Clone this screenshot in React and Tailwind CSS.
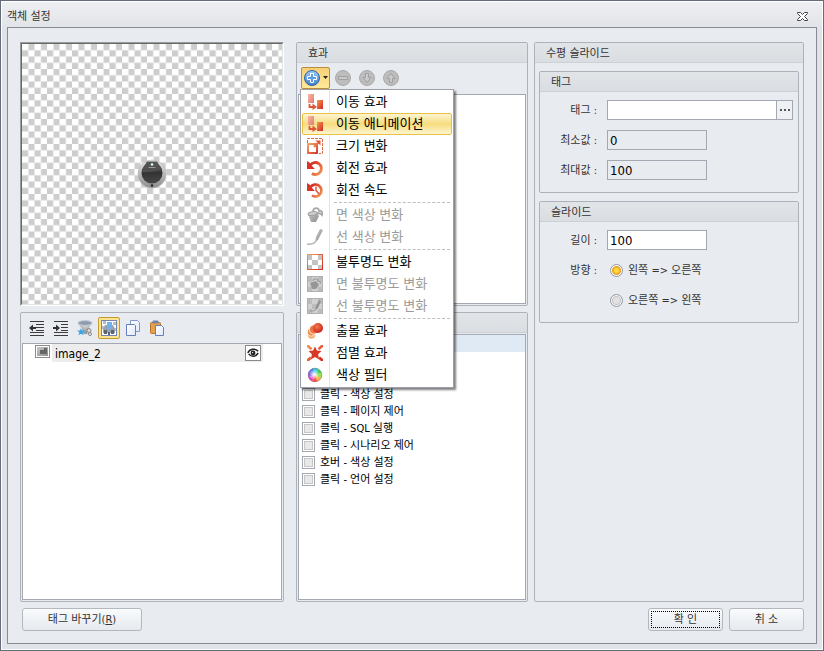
import React from "react";

const cn = (...c) => c.filter(Boolean).join(" ");

function Svg({ size = 16, children, className }) {
  return (
    <svg width={size} height={size} viewBox={`0 0 ${size} ${size}`} className={cn("block shrink-0", className)} aria-hidden="true">
      {children}
    </svg>
  );
}

function Gradients() {
  return (
    <svg width="0" height="0" className="absolute" aria-hidden="true">
      <defs>
        <linearGradient id="gRed" x1="0" y1="0" x2="1" y2="1">
          <stop offset="0" stopColor="#f39a55" />
          <stop offset="1" stopColor="#d3261f" />
        </linearGradient>
        <linearGradient id="gRedUp" x1="0" y1="0" x2="1" y2="1">
          <stop offset="0" stopColor="#d3261f" />
          <stop offset="1" stopColor="#f39a55" />
        </linearGradient>
        <linearGradient id="gPink" x1="0" y1="0" x2="1" y2="1">
          <stop offset="0" stopColor="#f9b9a0" />
          <stop offset="1" stopColor="#e4787a" />
        </linearGradient>
        <linearGradient id="gBlue" x1="0" y1="0" x2="0" y2="1">
          <stop offset="0" stopColor="#9ccbf5" />
          <stop offset="1" stopColor="#3f7fc9" />
        </linearGradient>
        <linearGradient id="gGray" x1="0" y1="0" x2="1" y2="1">
          <stop offset="0" stopColor="#c9c9c9" />
          <stop offset="1" stopColor="#8e8e8e" />
        </linearGradient>
        <linearGradient id="gPage" x1="0" y1="0" x2="1" y2="1">
          <stop offset="0" stopColor="#ffffff" />
          <stop offset="1" stopColor="#dfe8fb" />
        </linearGradient>
        <radialGradient id="gBall" cx="0.4" cy="0.35" r="0.7">
          <stop offset="0" stopColor="#f47a4c" />
          <stop offset="1" stopColor="#c81e18" />
        </radialGradient>
        <radialGradient id="gWhite">
          <stop offset="0" stopColor="#fff" />
          <stop offset="1" stopColor="#fff" stopOpacity="0" />
        </radialGradient>
        <linearGradient id="gMetal" x1="0" y1="0" x2="0" y2="1">
          <stop offset="0" stopColor="#e6e6e6" />
          <stop offset="1" stopColor="#8c8c8c" />
        </linearGradient>
        <linearGradient id="gKnob" x1="0" y1="0" x2="0" y2="1">
          <stop offset="0" stopColor="#5c5c5c" />
          <stop offset="0.5" stopColor="#333" />
          <stop offset="1" stopColor="#484848" />
        </linearGradient>
        <pattern id="checker" width="12.5" height="12.5" patternUnits="userSpaceOnUse">
          <rect width="12.5" height="12.5" fill="#fff" />
          <rect x="6.5" width="6" height="6.25" fill="#cdcdcd" />
          <rect y="6.25" width="6.25" height="6.25" fill="#cdcdcd" />
        </pattern>
      </defs>
    </svg>
  );
}

const MoveIcon = () => (
  <Svg>
    <rect x="1" y="0" width="6" height="9" fill="url(#gPink)" />
    <rect x="10" y="6" width="6" height="9" fill="url(#gRed)" />
    <path d="M2.500 10v3h3.500" fill="none" stroke="#e0563a" strokeWidth="1.800" />
    <path d="M5.500 9.500l4.500 3.500-4.500 3z" fill="#e0563a" />
  </Svg>
);
const ResizeIcon = () => (
  <Svg>
    <path d="M.5 5V.500H15.500V15.500H12" fill="none" stroke="#e06a4a" strokeDasharray="3 1" />
    <rect x="1" y="6" width="9" height="9" fill="#fff" stroke="url(#gRed)" strokeWidth="1.800" />
    <path d="M7 9l5-5" stroke="#e8744a" strokeWidth="1.800" />
    <path d="M8.500 2.500h5v5z" fill="#e0563a" />
  </Svg>
);
const RotateIcon = () => (
  <Svg>
    <path d="M3.500 5A6 6 0 1 1 5 13.500" fill="none" stroke="url(#gRedUp)" strokeWidth="2.800" />
    <path d="M0 1v8h8L5.500 6.500l-3-4z" fill="#d8342a" />
  </Svg>
);
const RotateSpeedIcon = () => (
  <Svg>
    <path d="M3.500 5A6 6 0 1 1 5 13.500" fill="none" stroke="url(#gRedUp)" strokeWidth="2.600" />
    <path d="M0 1v8h8L5.500 6.500l-3-4z" fill="#d8342a" />
    <path d="M9 4.500v4l3 3.500" fill="none" stroke="#e0563a" strokeWidth="1.500" />
  </Svg>
);
const BucketIcon = () => (
  <Svg>
    <path d="M1 7l8-2 3 4-3 6-5 0z" fill="url(#gGray)" />
    <ellipse cx="5.500" cy="6.500" rx="4.500" ry="1.800" transform="rotate(-12 5.500 6.500)" fill="#d0d0d0" stroke="#a0a0a0" />
    <path d="M6 5c0-5 6-5 6-1 3-1 4 2 3 4-1-2-3-2-6-2" fill="none" stroke="#a8a8a8" strokeWidth="1.800" />
  </Svg>
);
const BrushIcon = () => (
  <Svg>
    <path d="M13 0l3 1-5 10-3 2 1-5z" fill="url(#gGray)" />
    <path d="M0 15c4 .5 7 .5 9-3" fill="none" stroke="#b2b2b2" strokeWidth="1.500" />
  </Svg>
);
const OpacityIcon = () => (
  <Svg>
    <path d="M1 1h14v14H1z" fill="#fff" />
    <path d="M1 1h4v5H1zM11 1h4v5h-4zM5 6h6v5H5zM1 11h4v4H1zM11 11h4v4h-4z" fill="#c4c4c4" />
    <rect x=".5" y=".5" width="15" height="15" fill="none" stroke="url(#gRed)" />
  </Svg>
);
const boxed = (inner) => (
  <Svg>
    <rect x=".5" y=".5" width="15" height="15" fill="#d0d0d0" stroke="#b0b0b0" />
    <path d="M1 1h4v5H1zM11 1h4v5h-4zM5 6h6v5H5zM1 11h4v4H1zM11 11h4v4h-4z" fill="#bcbcbc" />
    {inner}
  </Svg>
);
const FaceOpacityIcon = () =>
  boxed(
    <>
      <path d="M3 7l6-2 3 4-3 4H5z" fill="#969696" />
      <path d="M6 5c0-3 5-3 5 0 2 0 3 1 2 3" fill="none" stroke="#999" strokeWidth="1.200" />
    </>
  );
const LineOpacityIcon = () =>
  boxed(
    <>
      <path d="M12 2l2 1-3 7-3 2 1-4z" fill="#929292" />
      <path d="M3 13c3 0 5 0 6-2" fill="none" stroke="#999" />
    </>
  );
const AppearIcon = () => (
  <Svg>
    <circle cx="4.500" cy="12" r="4" fill="#f6a257" stroke="#fff" strokeWidth=".8" />
    <circle cx="4.500" cy="9" r="4.200" fill="#f0914d" stroke="#fff" strokeWidth=".8" />
    <circle cx="7" cy="6.500" r="4.600" fill="#ec7440" stroke="#fff" strokeWidth=".8" />
    <circle cx="11" cy="5" r="5" fill="url(#gBall)" />
  </Svg>
);
const BlinkIcon = () => (
  <Svg>
    <path d="M8 1.500l1.900 4.100 4.600.4-3.400 3.200 1.100 5.200L8 12l-4.200 2.400 1.100-5.200L1.500 6l4.600-.4z" fill="#d63a26" />
    <path d="M0 0h2l3.500 3.500-2 1.500L0 2zM16 0h-2l-3.500 3.500 2 1.500L16 2zM0 16h2l3-2.500L3 11.500 0 14zM16 16h-2l-3-2.500 2-2 3 2.500z" fill="url(#gRed)" />
  </Svg>
);
const WHEEL = ["#ff4d4d", "#e63cc8", "#7b3fe0", "#3d6cf0", "#2fc6d8", "#3ccf5a", "#9be04a", "#ffb347"];
const ColorWheelIcon = () => (
  <Svg>
    {[...WHEEL].reverse().map((color, i) => {
      const a = (i * Math.PI) / 4 + Math.PI * 1.6;
      const b = a + Math.PI / 4 + 0.03;
      const p = (t) => `${8 + 7 * Math.cos(t)} ${8 + 7 * Math.sin(t)}`;
      return <path key={color} d={`M8 8L${p(a)}A7 7 0 0 1 ${p(b)}z`} fill={color} transform="matrix(1 0 0 -1 0 16)" />;
    })}
    <circle cx="7" cy="7.500" r="5.500" fill="url(#gWhite)" />
    <circle cx="8" cy="8" r="6.800" fill="none" stroke="#777" strokeOpacity=".5" />
  </Svg>
);

const ROUND_SHAPES = {
  plus: "M6.500 3.500h3v3h3v3h-3v3h-3v-3h-3v-3h3z",
  minus: "M3.500 6.500h9v3h-9z",
  down: "M6.500 3.500h3v4h2.500l-4 5-4-5h2.500z",
  up: "M6.500 12.500h3v-4h2.500l-4-5-4 5h2.500z",
};
const RoundIcon = ({ shape }) => {
  const active = shape === "plus";
  return (
    <Svg>
      <circle cx="8" cy="8" r="7.500" fill={active ? "url(#gBlue)" : "#bdbdbd"} stroke={active ? "#2d62ad" : "#a9a9a9"} />
      <path d={ROUND_SHAPES[shape]} fill={active ? "#5a9ce0" : "#cacaca"} stroke={active ? "#fff" : "#a0a0a0"} />
    </Svg>
  );
};

const OutdentIcon = () => (
  <Svg>
    <path d="M1 1.500h14M7 4.500h8M7 7.500h8M7 10.500h8M1 12.500h14M1 15.500h14" stroke="#3c3c3c" />
    <path d="M0 8l4-3.500V7h3v2H4v2.500z" fill="#333" />
  </Svg>
);
const IndentIcon = () => (
  <Svg>
    <path d="M1 1.500h14M8 4.500h7M8 7.500h7M8 10.500h7M1 12.500h14M1 15.500h14" stroke="#3c3c3c" />
    <path d="M7 8L3 4.500V7H0v2h3v2.500z" fill="#333" />
  </Svg>
);
const FilterIcon = () => (
  <Svg>
    <path d="M1 3l5 6v4l4 1V9l5-6z" fill="url(#gMetal)" stroke="#8794a6" strokeWidth=".7" />
    <ellipse cx="8" cy="3" rx="7" ry="2.400" fill="#8f9cae" stroke="#c2ccd8" />
    <path d="M4 8l1 2.400 3 .1-2.400 1.700 1 3L4 13.700 1.400 15.200l1-3L0 10.500l3-.1z" fill="#35a5e6" />
    <circle cx="12" cy="10.500" r="2" fill="#ddd" stroke="#888" />
    <circle cx="13" cy="14" r="1.500" fill="#eee" stroke="#888" />
  </Svg>
);
const PictureIcon = () => (
  <Svg>
    <rect x=".5" y=".5" width="15" height="15" fill="#fff" stroke="#7484b8" />
    <path d="M2 1h3v3H2zM12 2h3v3h-3zM1 6h2v3H1zM13 8h2v3h-2z" fill="#b4bcc8" />
    <path d="M2 13V9l2-4h8l2 4v4z" fill="#9aa2ae" />
    <path d="M3 10h3v4H3zM10 10h3v4h-3zM7 12h2v3H7z" fill="#5a6474" />
    <path d="M6 2h5v7H6z" fill="#6fb1ee" />
  </Svg>
);
const CopyIcon = () => (
  <Svg>
    <path d="M5.500.500h7l2 2v9h-9z" fill="url(#gPage)" stroke="#8399cf" />
    <path d="M1.500 4.500h8l1 1v10h-9z" fill="url(#gPage)" stroke="#667fbd" />
  </Svg>
);
const PasteIcon = () => (
  <Svg>
    <rect x="1.500" y="2.500" width="10" height="11" rx="1" fill="#e6a04c" stroke="#b8782f" />
    <rect x="3.500" y=".5" width="6" height="3" rx="1" fill="#7385a8" />
    <path d="M6.500 5.500h6l2 2v8h-8z" fill="url(#gPage)" stroke="#667fbd" />
  </Svg>
);

function Preview() {
  return (
    <div className="h-[264px] border border-t-[#9b9b9b] border-l-[#9b9b9b] border-r-white border-b-white">
      <div className="h-full border border-t-[#696969] border-l-[#696969] border-r-[#e3e3e3] border-b-[#e3e3e3]">
        <svg width="100%" height="100%" className="block" aria-label="preview">
          <rect width="100%" height="100%" fill="url(#checker)" />
          <svg x="50%" y="50%" className="overflow-visible">
            <circle cx="0" cy="0" r="14" fill="url(#gMetal)" stroke="#b4b4b4" strokeWidth=".6" />
            <circle cx="0" cy="-1" r="10.500" fill="url(#gKnob)" />
            <path d="M-5-12.500H5L9-6H-9z" fill="#545454" />
            <path d="M-10-2C0-1 6-4 10-4a10.500 10.500 0 0 0-2-4H-8z" fill="#505050" />
            <path d="M-3.500-6.500h7" stroke="#999" />
            <circle cx="0" cy="-9.500" r="1.300" fill="#dff" />
            <circle cx="0" cy="11.500" r="1.200" fill="#222" />
          </svg>
        </svg>
      </div>
    </div>
  );
}

function Panel({ title, className, children }) {
  return (
    <section className={cn("flex flex-col rounded-[2px] border border-[#adb1b9]", className)}>
      <h2 className="h-5 shrink-0 border-b border-[#cdd1d6] bg-linear-to-b from-[#e1e5e8] to-[#dadee2] pl-[11px] leading-[22px]">
        {title}
      </h2>
      {children}
    </section>
  );
}

const MENU = [
  [["이동 효과", MoveIcon], ["이동 애니메이션", MoveIcon, "active"], ["크기 변화", ResizeIcon], ["회전 효과", RotateIcon], ["회전 속도", RotateSpeedIcon]],
  [["면 색상 변화", BucketIcon, "disabled"], ["선 색상 변화", BrushIcon, "disabled"]],
  [["불투명도 변화", OpacityIcon], ["면 불투명도 변화", FaceOpacityIcon, "disabled"], ["선 불투명도 변화", LineOpacityIcon, "disabled"]],
  [["출몰 효과", AppearIcon], ["점멸 효과", BlinkIcon], ["색상 필터", ColorWheelIcon]],
];

function EffectMenu() {
  return (
    <div role="menu" className="absolute top-full left-0 z-10 -ml-px w-[154px] border border-[#9ba0aa] bg-white bg-[linear-gradient(#e2e4e7,#e2e4e7)] bg-[length:1px_100%] bg-[position:28px_0] bg-no-repeat p-px text-[13px] text-black shadow-[2px_2px_2px_rgba(0,0,0,0.5)]">
      {MENU.map((group, g) => (
        <React.Fragment key={g}>
          {g > 0 && <div role="separator" className="mr-0.5 ml-8 h-[3px]"><div className="h-0.5 border-b border-dashed border-[#bfbfbf]" /></div>}
          {group.map(([label, Icon, state]) => (
            <button
              key={label}
              type="button"
              role="menuitem"
              disabled={state === "disabled"}
              className={cn(
                "flex h-[22px] w-full items-center gap-[13px] rounded-[2px] border px-1 text-left whitespace-nowrap",
                state === "active" ? "border-[#e8c245] bg-linear-to-b from-[#fdf5d2] via-[#f6dc7c] to-[#fdf5cf]" : "border-transparent",
                state === "disabled" && "text-[#9a9a9a]"
              )}
            >
              <Icon />
              <span>{label}</span>
            </button>
          ))}
        </React.Fragment>
      ))}
    </div>
  );
}

const ACTIONS = ["클릭 - 색상 설정", "클릭 - 페이지 제어", "클릭 - SQL 실행", "클릭 - 시나리오 제어", "호버 - 색상 설정", "클릭 - 언어 설정"];

function Field({ id, label, children }) {
  return (
    <div className="flex h-5 items-center">
      <label htmlFor={id} className="mr-[10px] w-[50px] pt-0.5 text-right whitespace-nowrap">{label} :</label>
      {children}
    </div>
  );
}

const inputClass = "h-5 w-[100px] border border-[#a3a8b2] px-0.5 pt-px text-[13px] text-black outline-none";

function Direction({ id, label, checked }) {
  return (
    <div className="flex h-5 items-center gap-[5px] pl-[3px]">
      <input
        id={id}
        type="radio"
        name="direction"
        defaultChecked={checked}
        className="size-[13px] appearance-none rounded-full border border-[#9298a3] bg-[radial-gradient(circle,#e2e2e2_0_3px,#c4c4c4_4px,#f5f5f5_5px)] checked:bg-[radial-gradient(circle,#ffd83a_0_2px,#e89a22_4px,#ffffff_5px)]"
      />
      <label htmlFor={id} className="pt-0.5">{label}</label>
    </div>
  );
}

const dialogButton = "h-[23px] rounded-[3px] border border-[#b3b7be] bg-linear-to-b from-[#f9fbfc] to-[#e6e9ee]";

export default function App() {
  return (
    <div className="flex min-h-screen flex-col border border-[#656c79] bg-[#e0e3e7] font-['DejaVu_Sans_Condensed','Noto_Sans_CJK_KR',sans-serif] text-[11px] text-[#333]">
      <Gradients />
      <div className="flex flex-1 flex-col border border-white bg-linear-to-b from-[#eeeff3] to-[#e0e3e7] bg-[length:100%_26px] bg-no-repeat px-[5px] pb-[5px]">
        <header className="flex h-[25px] items-center justify-between pt-1 pr-[9px]">
          <h1 className="pt-0.5">객체 설정</h1>
          <button type="button" aria-label="닫기">
            <svg width="11" height="9" viewBox="0 0 11 9" className="block">
              <path d="M.5.500h3l2 2 2-2h3v1l-3 3 3 3v1h-3l-2-2-2 2h-3v-1l3-3-3-3z" fill="#fff" stroke="#3f444c" />
            </svg>
          </button>
        </header>
        <div className="flex flex-1 flex-col border border-[#868b94] bg-[#e8ebf0] px-3 pt-[14px] pb-3">
          <main className="grid flex-1 grid-cols-[270fr_232fr_270fr] gap-1.5">
            <div className="mr-1.5 flex flex-col gap-1.5">
              <Preview />
              <section className="flex flex-1 flex-col rounded-[2px] border border-[#adb1b9] px-px pb-px">
                <div className="flex h-[30px] items-center gap-2 pl-[7px]">
                  <button type="button" aria-label="내어쓰기"><OutdentIcon /></button>
                  <button type="button" aria-label="들여쓰기"><IndentIcon /></button>
                  <button type="button" aria-label="필터"><FilterIcon /></button>
                  <button type="button" aria-label="이미지" className="-mx-[3px] rounded-[2px] border border-[#c79a33] bg-[#fde58d] p-0.5"><PictureIcon /></button>
                  <button type="button" aria-label="복사"><CopyIcon /></button>
                  <button type="button" aria-label="붙여넣기"><PasteIcon /></button>
                </div>
                <div className="flex-1 border border-[#a3a8b2] bg-white pr-[18px] pl-3">
                  <div className="flex h-[18px] items-center gap-0.5">
                    <svg width="15" height="13" viewBox="0 0 15 13" className="mb-1 block">
                      <rect x=".5" y=".5" width="14" height="12" fill="#fff" stroke="#8c8c8c" />
                      <rect x="2" y="2" width="11" height="9" fill="url(#gGray)" />
                      <path d="M5 5h4V3h3v6H5z" fill="#666" />
                    </svg>
                    <div className="flex h-full flex-1 items-center justify-between bg-[#ededed] pr-0.5 pl-[3px] text-[12px] text-black">
                      <span className="pt-0.5">image_2</span>
                      <button type="button" aria-label="보이기" className="border border-[#8a8a8a] bg-white p-px">
                        <svg width="12" height="12" viewBox="0 0 14 14" className="block">
                          <path d="M1 7c2-5 9-6 12-2M2 8c3 4 8 4 11-1" fill="none" stroke="#222" strokeWidth="1.800" />
                          <circle cx="7" cy="7" r="2.800" fill="#222" />
                          <circle cx="6.500" cy="6.500" r=".8" fill="#fff" />
                        </svg>
                      </button>
                    </div>
                  </div>
                </div>
              </section>
            </div>

            <div className="flex flex-col gap-1.5">
              <Panel title="효과" className="h-[264px]">
                <div className="flex h-[31px] items-center gap-2 pb-0.5 pl-1">
                  <div className="relative -mr-[3px]">
                    <button type="button" aria-label="추가" aria-haspopup="menu" className="flex h-[22px] w-[29px] items-center gap-[3px] rounded-[2px] border border-[#b98d3c] bg-linear-to-b from-[#f7cf76] to-[#ffe99b] pl-0.5">
                      <RoundIcon shape="plus" />
                      <svg width="5" height="3" viewBox="0 0 5 3" className="block"><path d="M0 0h5L2.500 3z" fill="#222" /></svg>
                    </button>
                    <EffectMenu />
                  </div>
                  <button type="button" aria-label="삭제" disabled><RoundIcon shape="minus" /></button>
                  <button type="button" aria-label="아래로" disabled><RoundIcon shape="down" /></button>
                  <button type="button" aria-label="위로" disabled><RoundIcon shape="up" /></button>
                </div>
                <div className="mx-px mb-px flex-1 border border-[#a3a8b2] bg-white" />
              </Panel>
              <Panel title="" className="flex-1">
                <div className="m-px flex-1 border border-[#a3a8b2] bg-white text-black">
                  <div className="h-[17px] bg-[#e0eaf5]" />
                  <ul className="pt-[34px] pl-[3px]">
                    {ACTIONS.map((label) => (
                      <li key={label}>
                        <label className="flex h-[17px] items-center gap-[5px] whitespace-nowrap">
                          <input type="checkbox" className="size-[13px] appearance-none border border-[#a3a8b2] bg-[#e8e8e8] shadow-[inset_0_0_0_1px_#fff,inset_0_0_0_2px_#c6c6c6]" />
                          <span className="pt-0.5">{label}</span>
                        </label>
                      </li>
                    ))}
                  </ul>
                </div>
              </Panel>
            </div>

            <Panel title="수평 슬라이드">
              <div className="flex flex-col gap-2 px-1 pt-2">
                <Panel title="태그">
                  <div className="flex flex-col gap-[10px] pt-2 pr-[5px] pb-3 pl-[7px]">
                    <Field id="tag" label="태그">
                      <input id="tag" type="text" className="h-5 min-w-0 flex-1 border border-[#a3a8b2] bg-white px-0.5 text-[13px] outline-none" />
                      <button type="button" aria-label="찾아보기" className="-ml-px flex h-5 w-[17px] items-center justify-center gap-0.5 border border-[#a3a8b2] bg-[#eef0f4]">
                        <i className="size-0.5 bg-[#555]" /><i className="size-0.5 bg-[#555]" /><i className="size-0.5 bg-[#555]" />
                      </button>
                    </Field>
                    <Field id="min" label="최소값">
                      <input id="min" type="text" defaultValue="0" readOnly className={inputClass} />
                    </Field>
                    <Field id="max" label="최대값">
                      <input id="max" type="text" defaultValue="100" readOnly className={inputClass} />
                    </Field>
                  </div>
                </Panel>
                <Panel title="슬라이드">
                  <div className="flex flex-col gap-[10px] pt-2 pr-[5px] pb-3 pl-[7px]">
                    <Field id="length" label="길이">
                      <input id="length" type="text" defaultValue="100" className={cn(inputClass, "bg-white")} />
                    </Field>
                    <div role="radiogroup" aria-label="방향" className="flex">
                      <span className="mr-[10px] h-5 w-[50px] text-right leading-[22px]">방향 :</span>
                      <div className="flex flex-col gap-[10px]">
                        <Direction id="ltr" label="왼쪽 => 오른쪽" checked />
                        <Direction id="rtl" label="오른쪽 => 왼쪽" />
                      </div>
                    </div>
                  </div>
                </Panel>
              </div>
            </Panel>
          </main>
          <footer className="flex gap-1.5 pt-1.5 pl-0.5">
            <button type="button" className={cn(dialogButton, "mr-auto w-[120px] pt-0.5")}>태그 바꾸기(<u>R</u>)</button>
            <button type="button" className={cn(dialogButton, "w-[75px] p-0.5")}>
              <span className="flex h-full items-center justify-center border border-dotted border-black pt-0.5">확 인</span>
            </button>
            <button type="button" className={cn(dialogButton, "w-[75px] pt-0.5")}>취 소</button>
          </footer>
        </div>
      </div>
    </div>
  );
}
